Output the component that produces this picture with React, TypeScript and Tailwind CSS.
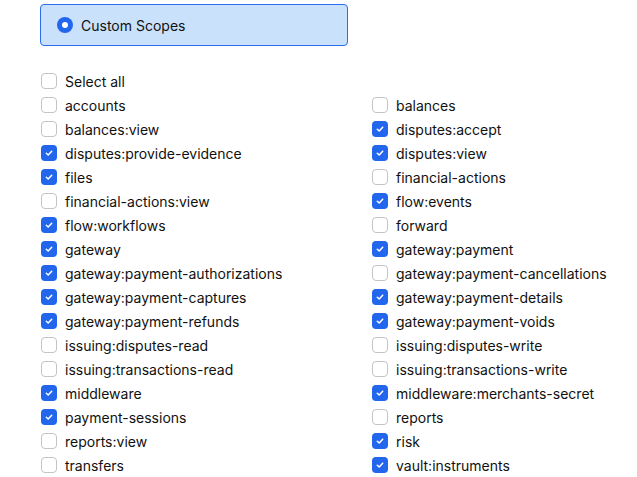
import React from "react";

const left: [string, boolean][] = [
  ["accounts", false],
  ["balances:view", false],
  ["disputes:provide-evidence", true],
  ["files", true],
  ["financial-actions:view", false],
  ["flow:workflows", true],
  ["gateway", true],
  ["gateway:payment-authorizations", true],
  ["gateway:payment-captures", true],
  ["gateway:payment-refunds", true],
  ["issuing:disputes-read", false],
  ["issuing:transactions-read", false],
  ["middleware", true],
  ["payment-sessions", true],
  ["reports:view", false],
  ["transfers", false],
];
const right: [string, boolean][] = [
  ["balances", false],
  ["disputes:accept", true],
  ["disputes:view", true],
  ["financial-actions", false],
  ["flow:events", true],
  ["forward", false],
  ["gateway:payment", true],
  ["gateway:payment-cancellations", false],
  ["gateway:payment-details", true],
  ["gateway:payment-voids", true],
  ["issuing:disputes-write", false],
  ["issuing:transactions-write", false],
  ["middleware:merchants-secret", true],
  ["reports", false],
  ["risk", true],
  ["vault:instruments", true],
];

function Box({ checked }: { checked: boolean }) {
  return checked ? (
    <span className="flex h-4 w-4 shrink-0 items-center justify-center rounded-[4px] bg-[#2266ee]">
      <svg width="10" height="10" viewBox="0 0 10 10" fill="none">
        <path d="M2.3 5.2 L4.2 7 L7.7 3.2" stroke="white" strokeWidth="1.5" strokeLinecap="round" strokeLinejoin="round" />
      </svg>
    </span>
  ) : (
    <span className="h-4 w-4 shrink-0 rounded-[4px] border border-[#c4c4c4] bg-white" />
  );
}

function Item({ label, checked }: { label: string; checked: boolean }) {
  return (
    <div className="flex h-6 items-center gap-2">
      <Box checked={checked} />
      <span className="text-[14px] text-[#111111]">{label}</span>
    </div>
  );
}

export default function App() {
  return (
    <div className="h-[477px] w-[637px] bg-white pl-[41px] pt-1" style={{ fontFamily: "Inter, 'Noto Sans', sans-serif" }}>
      <div className="-ml-px flex h-[42px] w-[308px] items-center gap-2 rounded-[4px] border border-[#2c6cf0] bg-[#c9e1fb] pl-[16px]">
        <span className="flex h-4 w-4 items-center justify-center rounded-full bg-[#2266ee]">
          <span className="h-[6px] w-[6px] rounded-full bg-white" />
        </span>
        <span className="text-[14px] text-[#111111]">Custom Scopes</span>
      </div>
      <div className="mt-[23px]">
        <Item label="Select all" checked={false} />
        <div className="grid grid-cols-[331px_1fr]">
          <div className="flex flex-col">
            {left.map(([l, c]) => (
              <Item key={l} label={l} checked={c} />
            ))}
          </div>
          <div className="flex flex-col">
            {right.map(([l, c]) => (
              <Item key={l} label={l} checked={c} />
            ))}
          </div>
        </div>
      </div>
    </div>
  );
}
